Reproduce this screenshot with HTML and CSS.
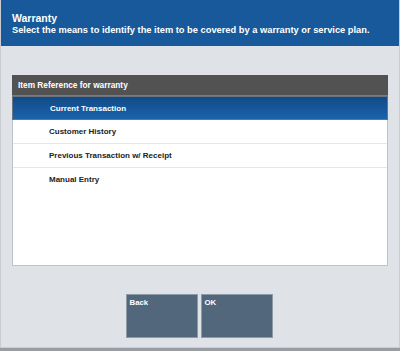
FILE: index.html
```html
<!DOCTYPE html>
<html>
<head>
<meta charset="utf-8">
<link rel="stylesheet" href="styles.css">
</head>
<body>
<div class="screen">
  <header class="top">
    <div class="title">Warranty</div>
    <div class="subtitle">Select the means to identify the item to be covered by a warranty or service plan.</div>
  </header>
  <main class="body">
    <section class="panel">
      <div class="panel-head">Item Reference for warranty</div>
      <ul class="list">
        <li class="row selected">Current Transaction</li>
        <li class="row">Customer History</li>
        <li class="row">Previous Transaction w/ Receipt</li>
        <li class="row">Manual Entry</li>
      </ul>
    </section>
    <div class="buttons">
      <button class="btn">Back</button>
      <button class="btn">OK</button>
    </div>
  </main>
</div>
</body>
</html>
```
FILE: styles.css
```css
* { box-sizing: border-box; }
html, body { margin: 0; padding: 0; }
body {
  width: 400px;
  height: 351px;
  background: #9a9ea3;
  font-family: "Liberation Sans", Arial, sans-serif;
  overflow: hidden;
}
.screen {
  width: 400px;
  height: 348px;
  background: #dfe2e7;
  border-left: 1px solid #c9ccd1;
  border-right: 1px solid #c9ccd1;
  display: flex;
  flex-direction: column;
}
.top {
  background: #17599b;
  height: 46px;
  padding: 13px 0 0 11px;
  color: #fff;
  font-weight: bold;
}
.title { font-size: 10.5px; line-height: 11px; }
.subtitle { font-size: 9.3px; line-height: 10px; margin-top: 1px; letter-spacing: 0; }
.body {
  flex: 1;
  padding: 29px 11px 0 11px;
  display: flex;
  flex-direction: column;
  border-bottom: 1px solid #c9ccd1;
}
.panel {
  height: 191px;
  background: #fff;
  border: 1px solid #c0c4ca;
  border-top: none;
  display: flex;
  flex-direction: column;
}
.panel-head {
  background: #525252;
  color: #fff;
  font-size: 8.3px;
  font-weight: bold;
  height: 21px;
  line-height: 20px;
  padding-left: 6px;
  border-bottom: 1px solid #7a7a7a;
  margin: 0 -1px;
}
.list { list-style: none; margin: 0; padding: 0; }
.row {
  height: 24px;
  line-height: 23px;
  padding-left: 36px;
  font-size: 8px;
  font-weight: bold;
  color: #222;
  border-bottom: 1px solid #e6e7e9;
}
.row:last-child { border-bottom: none; }
.row.selected {
  background: linear-gradient(#114a86, #1b63ad);
  color: #fff;
  border: 1px solid #6a7480;
  margin: 0 -1px;
  padding-left: 37px;
}
.buttons {
  display: flex;
  justify-content: center;
  gap: 3px;
  margin-top: 28px;
  padding-right: 2px;
}
.btn {
  width: 72px;
  height: 44px;
  background: #52667c;
  border: 1px solid #8d9aa8;
  color: #fff;
  font-family: "Liberation Sans", Arial, sans-serif;
  font-weight: bold;
  font-size: 7.8px;
  text-align: left;
  padding: 3px 3px;
  display: flex;
  align-items: flex-start;
  margin: 0;
}
```
